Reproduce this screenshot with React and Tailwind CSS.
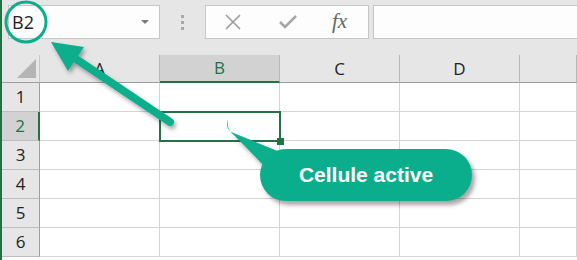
import React from 'react';

const cols = ['A', 'B', 'C', 'D', ''];
const rows = [1, 2, 3, 4, 5, 6];

const TopBar = () => (
  <div className="h-[55px] bg-[#e6e6e6] flex items-start pt-[5px] pl-[6px] gap-0">
    <div className="w-[152px] h-[34px] bg-[#fdfdfd] border border-[#c6c6c6] flex items-center justify-between pl-[3px] pr-[10px]">
      <span className="text-[18px] text-[#222]">B2</span>
      <svg width="8" height="5" viewBox="0 0 8 5"><path d="M0 0 L8 0 L4 4 Z" fill="#7a7a7a" /></svg>
    </div>
    <div className="w-[45px] h-[34px] flex flex-col items-center justify-center gap-[3px]">
      <span className="w-[3px] h-[3px] bg-[#a8a8a8]" />
      <span className="w-[3px] h-[3px] bg-[#a8a8a8]" />
      <span className="w-[3px] h-[3px] bg-[#a8a8a8]" />
    </div>
    <div className="w-[164px] h-[34px] bg-[#fdfdfd] border border-[#c6c6c6] flex items-center">
      <svg className="ml-[19px]" width="16" height="16" viewBox="0 0 16 16">
        <path d="M1 1 L15 15 M15 1 L1 15" stroke="#9a9a9a" strokeWidth="1.6" />
      </svg>
      <svg className="ml-[38px]" width="18" height="14" viewBox="0 0 18 14">
        <path d="M1 7 L6 12 L17 1" stroke="#a6a6a6" strokeWidth="2.6" fill="none" />
      </svg>
      <span className="ml-[35px] text-[21px] italic text-[#666]" style={{ fontFamily: '"Liberation Serif", serif' }}>fx</span>
    </div>
    <div className="ml-[4px] flex-1 h-[34px] bg-[#fdfdfd] border border-[#c6c6c6] border-r-0" />
  </div>
);

const Grid = () => (
  <div className="grid grid-cols-[38px_120px_120px_120px_120px_1fr]">
    <div className="h-[28px] bg-[#e6e6e6] border-r border-b border-r-[#c8c8c8] border-b-[#9e9e9e] flex items-end justify-end pr-[3px] pb-[4px]">
      <svg width="19" height="19" viewBox="0 0 19 19"><path d="M19 0 L19 19 L0 19 Z" fill="#b4b4b4" /></svg>
    </div>
    {cols.map((c, i) => (
      <div
        key={'h' + i}
        className={
          c === 'B'
            ? 'h-[28px] bg-[#d2d2d2] border-r border-b-2 border-r-[#b8b8b8] border-b-[#217346] flex items-center justify-center text-[17px] text-[#217346]'
            : 'h-[28px] bg-[#e6e6e6] border-r border-b border-r-[#b8b8b8] border-b-[#9e9e9e] flex items-center justify-center text-[17px] text-[#222]'
        }
      >
        {c}
      </div>
    ))}
    {rows.map((r) => (
      <React.Fragment key={r}>
        <div
          className={
            r === 2
              ? 'h-[29px] bg-[#d2d2d2] border-r-2 border-b border-r-[#217346] border-b-[#bdbdbd] flex items-center justify-center text-[17px] text-[#217346]'
              : 'h-[29px] bg-[#e6e6e6] border-r border-b border-r-[#9e9e9e] border-b-[#bdbdbd] flex items-center justify-center text-[17px] text-[#222]'
          }
        >
          {r}
        </div>
        {cols.map((c, i) => (
          <div key={c + i} className="h-[29px] bg-white border-r border-b border-[#d4d4d4] relative">
            {r === 2 && c === 'B' && (
              <div className="absolute z-10 -left-[1px] -top-[1px] w-[122px] h-[31px] border-2 border-[#217346]">
                <div className="absolute -right-[5px] -bottom-[5px] w-[7px] h-[7px] bg-[#217346]" />
              </div>
            )}
          </div>
        ))}
      </React.Fragment>
    ))}
  </div>
);

export default function App() {
  return (
    <div className="relative w-[577px] h-[260px] overflow-hidden bg-white border-l-2 border-[#217346]" style={{ fontFamily: '"Open Sans", "Noto Sans", sans-serif' }}>
      <TopBar />
      <Grid />
      <svg className="absolute z-20 left-[-2px] top-0 pointer-events-none" width="577" height="260" viewBox="0 0 577 260">
        <defs>
          <filter id="sh" x="-20%" y="-20%" width="140%" height="140%">
            <feDropShadow dx="2" dy="3" stdDeviation="2" floodColor="#000" floodOpacity="0.35" />
          </filter>
        </defs>
        <circle cx="26" cy="22" r="20" fill="none" stroke="#0bae8c" strokeWidth="3" />
        <g filter="url(#sh)">
          <line x1="76" y1="59" x2="170" y2="122" stroke="#0bae8c" strokeWidth="8" strokeLinecap="round" />
          <path d="M51 42 L84 47 L68 71 Z" fill="#0bae8c" />
        </g>
        <path d="M228 119 Q225 127 231 132 L280 152 L266 168 L235 136 Q226 130 228 119 Z" fill="#0bae8c" filter="url(#sh)" />
      </svg>
      <div className="absolute z-20 left-[258px] top-[149px] w-[212px] h-[52px] rounded-[26px] bg-[#0bae8c] shadow-[3px_4px_4px_rgba(0,0,0,0.35)] flex items-center justify-center text-white font-bold text-[21px]" style={{ fontFamily: '"Liberation Sans", Arial, sans-serif' }}>
        Cellule active
      </div>
    </div>
  );
}
